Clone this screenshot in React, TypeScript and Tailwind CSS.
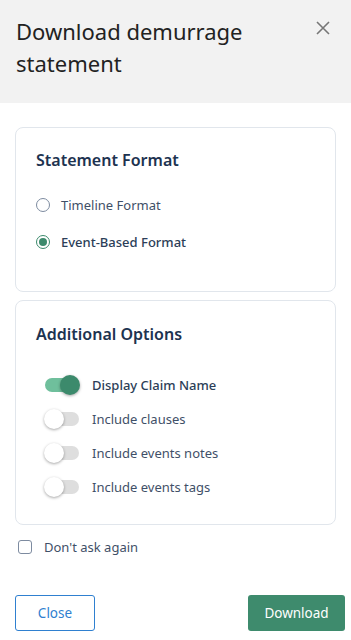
import { useState } from "react";

function Toggle({ on }: { on: boolean }) {
  return (
    <div className="relative w-[36px] h-[20px] flex items-center shrink-0">
      <div
        className={
          on
            ? "w-[34px] h-[14px] rounded-full bg-[#6fbf9c] ml-[1px]"
            : "w-[34px] h-[14px] rounded-full bg-[#dedede] ml-[1px]"
        }
      />
      <div
        className={
          on
            ? "absolute right-0 top-0 w-[20px] h-[20px] rounded-full bg-[#3c8a6c] shadow-[0_1px_3px_rgba(0,0,0,0.35)]"
            : "absolute left-0 top-0 w-[20px] h-[20px] rounded-full bg-white shadow-[0_1px_3px_rgba(0,0,0,0.35)]"
        }
      />
    </div>
  );
}

export default function App() {
  const [format, setFormat] = useState("event");
  const options = [
    { label: "Display Claim Name", on: true },
    { label: "Include clauses", on: false },
    { label: "Include events notes", on: false },
    { label: "Include events tags", on: false },
  ];

  return (
    <div
      className="w-[351px] h-[640px] bg-white flex flex-col"
      style={{ fontFamily: '"Noto Sans", "Open Sans", sans-serif' }}
    >
      <div className="bg-[#f2f2f2] h-[103px] flex justify-between pl-[16px] pr-[18px] pt-[15px]">
        <h1 className="text-[22px] leading-[32px] text-[#222] font-normal">
          Download demurrage statement
        </h1>
        <button className="mt-[4px] w-[18px] h-[18px] text-[#777] shrink-0">
          <svg viewBox="0 0 16 16" width="16" height="16" stroke="currentColor" strokeWidth="1.6" fill="none">
            <path d="M2 2 L14 14 M14 2 L2 14" />
          </svg>
        </button>
      </div>

      <div className="px-[15px] pt-[24px] flex flex-col gap-[8px]">
        <div className="border border-[#e1e6ec] rounded-[8px] h-[165px] px-[20px] pt-[21px]">
          <h2 className="text-[16px] leading-[22px] font-semibold text-[#1d3350]">Statement Format</h2>
          <div className="mt-[24px] flex flex-col gap-[17px]">
            <label className="flex items-center gap-[11px] cursor-pointer" onClick={() => setFormat("timeline")}>
              <span
                className={
                  format === "timeline"
                    ? "w-[14px] h-[14px] rounded-full border-[1.5px] border-[#3c8a6c] flex items-center justify-center"
                    : "w-[14px] h-[14px] rounded-full border-[1.5px] border-[#7d8ba0]"
                }
              >
                {format === "timeline" && <span className="w-[8px] h-[8px] rounded-full bg-[#3c8a6c]" />}
              </span>
              <span className={format === "timeline" ? "text-[13px] leading-[20px] text-[#2c3e58] font-medium" : "text-[13px] leading-[20px] text-[#3f5068]"}>
                Timeline Format
              </span>
            </label>
            <label className="flex items-center gap-[11px] cursor-pointer" onClick={() => setFormat("event")}>
              <span
                className={
                  format === "event"
                    ? "w-[14px] h-[14px] rounded-full border-[1.5px] border-[#3c8a6c] flex items-center justify-center"
                    : "w-[14px] h-[14px] rounded-full border-[1.5px] border-[#7d8ba0]"
                }
              >
                {format === "event" && <span className="w-[8px] h-[8px] rounded-full bg-[#3c8a6c]" />}
              </span>
              <span className={format === "event" ? "text-[13px] leading-[20px] text-[#2c3e58] font-medium" : "text-[13px] leading-[20px] text-[#3f5068]"}>
                Event-Based Format
              </span>
            </label>
          </div>
        </div>

        <div className="border border-[#e1e6ec] rounded-[8px] h-[225px] px-[20px] pt-[22px]">
          <h2 className="text-[16px] leading-[22px] font-semibold text-[#1d3350]">Additional Options</h2>
          <div className="mt-[30px] pl-[8px] flex flex-col gap-[14px]">
            {options.map((o) => (
              <div key={o.label} className="flex items-center gap-[12px]">
                <Toggle on={o.on} />
                <span className={o.on ? "text-[13px] leading-[20px] font-medium text-[#2c3e58]" : "text-[13px] leading-[20px] text-[#3f5068]"}>
                  {o.label}
                </span>
              </div>
            ))}
          </div>
        </div>
      </div>

      <label className="flex items-center gap-[12px] pl-[18px] mt-[12px]">
        <span className="w-[14px] h-[14px] rounded-[3px] border-[1.5px] border-[#7d8ba0] bg-white" />
        <span className="text-[13px] leading-[20px] text-[#3f5068]">Don't ask again</span>
      </label>

      <div className="flex justify-between pr-[6px] pl-[15px] mt-[38px]">
        <button className="w-[80px] h-[36px] border border-[#2f80d0] rounded-[3px] text-[#2f7fd0] text-[13.5px]">
          Close
        </button>
        <button className="w-[97px] h-[36px] rounded-[3px] bg-[#3e8b6d] text-white text-[13.5px]">
          Download
        </button>
      </div>
    </div>
  );
}
